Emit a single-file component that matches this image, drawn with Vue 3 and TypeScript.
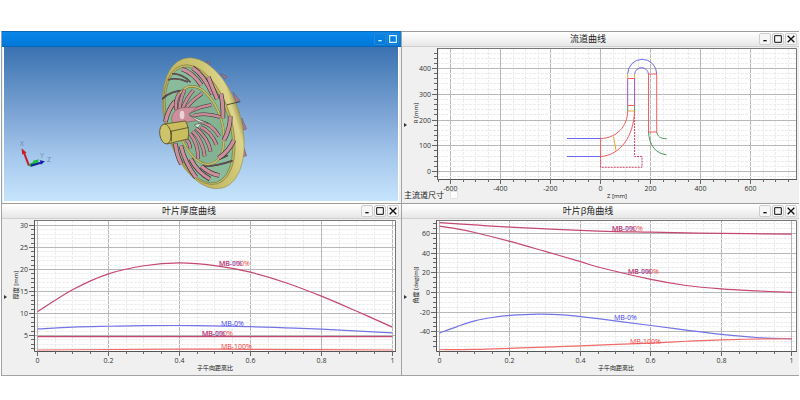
<script setup lang="ts">
type Point = [number, number]

interface Series {
  color: string
  points: Point[]
}

interface CurveLabel {
  text: string
  color: string
  x: number
  y: number
}

interface Chart {
  id: string
  title: string
  width: number
  frame: { left: number; right: number; top: number; bottom: number }
  x: { origin: number; scale: number; min: number; max: number; minor: number; major: number; name: string; nameAt: number }
  y: { origin: number; scale: number; min: number; max: number; minor: number; major: number; name: string; nameAt: number; nameX: number }
  series: Series[]
  labels: CurveLabel[]
  option?: string
}

interface Tick {
  pos: number
  major: boolean
  label: string
}

const HEIGHT = 156
const BLUE = '#7474e6'
const CRIMSON = '#c4486f'
const RED = '#ef6b6b'
const LABEL_BLUE = '#3b3bf0'
const LABEL_RED = '#f03c3c'

const charts: Chart[] = [
  {
    id: 'channel',
    title: '流道曲线',
    width: 397,
    frame: { left: 35, right: 395, top: 1, bottom: 132 },
    x: { origin: 198, scale: 0.25, min: -650, max: 780, minor: 50, major: 200, name: 'Z [mm]', nameAt: 215 },
    y: { origin: 124, scale: 0.2575, min: -20, max: 470, minor: 20, major: 100, name: 'R [mm]', nameAt: 66, nameX: 16 },
    series: [],
    labels: [],
    option: '主流道尺寸',
  },
  {
    id: 'thickness',
    title: '叶片厚度曲线',
    width: 399,
    frame: { left: 32, right: 394, top: 1, bottom: 132 },
    x: { origin: 35, scale: 354.8, min: 0, max: 1, minor: 0.05, major: 0.2, name: '子午向距离比', nameAt: 213 },
    y: { origin: 138, scale: 4.4, min: 2, max: 30, minor: 1, major: 5, name: '厚度 [mm]', nameAt: 66, nameX: 16 },
    series: [
      { color: CRIMSON, points: [[0, 10.4], [0.1, 15.45], [0.2, 19], [0.3, 20.85], [0.4, 21.5], [0.5, 20.9], [0.6, 19.4], [0.7, 17], [0.8, 13.95], [0.9, 10.5], [1, 6.9]] },
      { color: BLUE, points: [[0, 6.5], [0.1, 6.9], [0.2, 7.1], [0.3, 7.25], [0.45, 7.25], [0.6, 7], [0.7, 6.75], [0.8, 6.45], [1, 5.6]] },
      { color: CRIMSON, points: [[0, 4.75], [1, 4.75]] },
      { color: RED, points: [[0, 1.7], [0.4, 1.9], [0.6, 1.85], [1, 1.7]] },
    ],
    labels: [
      { text: 'MB-0%', color: LABEL_BLUE, x: 217, y: 47 },
      { text: 'MB-100%', color: LABEL_RED, x: 217, y: 47 },
      { text: 'MB-0%', color: LABEL_BLUE, x: 219, y: 107 },
      { text: 'MB-0%', color: LABEL_BLUE, x: 200, y: 117 },
      { text: 'MB-100%', color: LABEL_RED, x: 200, y: 117 },
      { text: 'MB-100%', color: LABEL_RED, x: 219, y: 130 },
    ],
  },
  {
    id: 'beta',
    title: '叶片β角曲线',
    width: 397,
    frame: { left: 34, right: 395, top: 1, bottom: 132 },
    x: { origin: 37, scale: 352.4, min: 0, max: 1, minor: 0.05, major: 0.2, name: '子午向距离比', nameAt: 214 },
    y: { origin: 73, scale: 0.985, min: -55, max: 70, minor: 5, major: 20, name: '角度 [deg(m)]', nameAt: 66, nameX: 16 },
    series: [
      { color: CRIMSON, points: [[0, 70.9], [0.1, 68.6], [0.2, 66.4], [0.45, 62.4], [0.6, 61.2], [0.8, 60], [1, 59.3]] },
      { color: CRIMSON, points: [[0, 67.4], [0.05, 64.6], [0.1, 60.9], [0.2, 51.9], [0.3, 41.7], [0.4, 31.3], [0.45, 25.9], [0.6, 13.3], [0.7, 7.1], [0.8, 3.6], [0.9, 1.6], [1, 0.1]] },
      { color: BLUE, points: [[0, -41.2], [0.05, -34.6], [0.1, -28.8], [0.15, -25.4], [0.2, -23.3], [0.28, -22], [0.35, -22.8], [0.45, -26.6], [0.6, -33.5], [0.7, -38.2], [0.8, -42.6], [0.9, -45.7], [1, -47]] },
      { color: RED, points: [[0, -58.1], [0.1, -57.8], [0.2, -56.7], [0.3, -55.4], [0.45, -53.4], [0.6, -51.3], [0.7, -49.5], [0.8, -48], [0.95, -47], [1, -47]] },
    ],
    labels: [
      { text: 'MB-0%', color: LABEL_BLUE, x: 210, y: 12 },
      { text: 'MB-100%', color: LABEL_RED, x: 210, y: 12 },
      { text: 'MB-0%', color: LABEL_BLUE, x: 226, y: 55 },
      { text: 'MB-100%', color: LABEL_RED, x: 226, y: 55 },
      { text: 'MB-0%', color: LABEL_BLUE, x: 212, y: 101 },
      { text: 'MB-100%', color: LABEL_RED, x: 228, y: 125 },
    ],
  },
]

function ticks(axis: Chart['x'] | Chart['y'], direction: 1 | -1): Tick[] {
  const first = Math.ceil(axis.min / axis.minor)
  const last = Math.floor(axis.max / axis.minor + 1e-6)
  const every = Math.round(axis.major / axis.minor)
  const list: Tick[] = []
  for (let i = first; i <= last; i++) {
    const value = i * axis.minor
    list.push({
      pos: Math.round(axis.origin + direction * value * axis.scale) + 0.5,
      major: i % every === 0,
      label: String(Math.round(value * 10) / 10),
    })
  }
  return list
}

/* Smooth curve through the data points (Catmull-Rom turned into Béziers). */
function curve(chart: Chart, points: Point[]): string {
  const p = points.map(([x, y]): Point => [
    chart.x.origin + 0.5 + x * chart.x.scale,
    chart.y.origin + 0.5 - y * chart.y.scale,
  ])
  let d = `M${p[0][0]} ${p[0][1]}`
  for (let i = 0; i < p.length - 1; i++) {
    const a = p[Math.max(i - 1, 0)]
    const b = p[i]
    const c = p[i + 1]
    const e = p[Math.min(i + 2, p.length - 1)]
    d += ` C${b[0] + (c[0] - a[0]) / 6} ${b[1] + (c[1] - a[1]) / 6} ${c[0] - (e[0] - b[0]) / 6} ${c[1] - (e[1] - b[1]) / 6} ${c[0]} ${c[1]}`
  }
  return d
}

const plots = charts.map((chart) => ({
  ...chart,
  xTicks: ticks(chart.x, 1),
  yTicks: ticks(chart.y, -1),
  paths: chart.series.map((s) => ({ color: s.color, d: curve(chart, s.points) })),
}))

const thinBlades = [
  'M68 163 Q90 140 132 138',
  'M86 106 Q110 98 142 112',
  'M98 88 Q126 88 150 112',
  'M84 196 Q92 178 108 164',
  'M186 366 Q225 368 276 350',
  'M200 352 Q238 348 262 334',
]

const outerBlades = [
  'M76 232 Q84 196 104 172',
  'M126 74 Q158 84 184 122',
  'M158 70 Q192 92 218 150',
  'M205 98 Q216 126 232 164',
  'M243 148 Q250 180 249 222',
  'M271 216 Q272 250 252 288',
  'M282 288 Q268 320 236 342',
  'M106 298 Q110 334 124 360',
  'M122 304 Q136 358 168 400',
  'M152 344 Q172 384 210 405',
  'M184 366 Q208 388 238 394',
]

const innerBlades = [
  'M108 196 Q104 168 118 146',
  'M118 194 Q122 160 134 136',
  'M128 192 Q140 160 160 138',
  'M136 196 Q152 170 186 148',
  'M142 206 Q180 186 214 182',
  'M160 214 Q200 204 240 218',
  'M176 232 Q214 236 238 276',
  'M182 248 Q214 262 230 302',
  'M168 252 Q204 280 212 322',
  'M158 260 Q190 292 194 336',
  'M150 268 Q176 300 174 344',
  'M138 286 Q150 294 150 312',
]

const tabs = [
  'M200 50 L209 52 L208 60 Z',
  'M242 88 L260 96 L256 103 Z',
  'M280 144 L299 168 L290 173 Z',
  'M306 222 L320 254 L312 257 Z',
  'M310 304 L320 334 L311 338 Z',
]
</script>

<template>
  <main class="workspace">
    <section class="window active" aria-label="3D">
      <header class="titlebar">
        <h2 class="title"></h2>
        <button type="button" class="tool" aria-label="最小化">
          <svg viewBox="0 0 12 12"><path d="M4 8h4" stroke-width="1.6" /></svg>
        </button>
        <button type="button" class="tool" aria-label="最大化">
          <svg viewBox="0 0 12 12"><path d="M2 2h8v8h-8z" stroke-width="1.4" /></svg>
        </button>
      </header>
      <div class="scene">
        <svg class="view" viewBox="0 0 395 154">
          <defs>
            <linearGradient id="rim" x1="0" y1="0" x2="1" y2="0">
              <stop offset="0" stop-color="#b5ab58" />
              <stop offset="0.7" stop-color="#cfc674" />
              <stop offset="0.92" stop-color="#ddd58c" />
              <stop offset="1" stop-color="#a79d50" />
            </linearGradient>
          </defs>
          <g transform="translate(136.5 -2.5) scale(0.3333)" stroke-linecap="round" stroke-linejoin="round">
            <path v-for="d in tabs" :key="d" :d="d" fill="#b4788a" stroke="#6b4a58" stroke-width="1.5" />
            <ellipse cx="190" cy="237" rx="113" ry="203" transform="rotate(-17 190 237)" fill="url(#rim)" stroke="#8f874a" stroke-width="1.5" />
            <ellipse cx="178" cy="241" rx="97" ry="186" transform="rotate(-17 178 241)" fill="#c3b964" stroke="#6a6538" stroke-width="1.5" />
            <ellipse cx="177" cy="242" rx="91" ry="180" transform="rotate(-17 177 242)" fill="#8abb9a" stroke="#5a6640" stroke-width="1.5" />
            <path d="M262 181 L300 172" stroke="#34331f" stroke-width="2.5" />
            <g fill="none">
              <path v-for="d in thinBlades" :key="d" :d="d" stroke="#3b3337" stroke-width="5" />
              <path v-for="d in thinBlades" :key="d + 'f'" :d="d" stroke="#8a6470" stroke-width="2" />
            </g>
            <ellipse cx="180" cy="243" rx="66" ry="121" transform="rotate(-17 180 243)" fill="#83b392" stroke="#6d683a" stroke-width="7" />
            <ellipse cx="180" cy="243" rx="66" ry="121" transform="rotate(-17 180 243)" fill="none" stroke="#c8be66" stroke-width="5" />
            <g fill="none" stroke-linecap="butt">
              <template v-for="d in outerBlades" :key="d">
                <path :d="d" stroke="#3d2f35" stroke-width="14" />
                <path :d="d" stroke="#cb909b" stroke-width="10" />
              </template>
              <template v-for="d in innerBlades" :key="d">
                <path :d="d" stroke="#3d2f35" stroke-width="11" />
                <path :d="d" stroke="#c88d98" stroke-width="8" />
              </template>
            </g>
            <path d="M94 222 Q98 196 124 190 L172 188 L146 210 L178 228 L138 234 L100 240 Z" fill="#cc8f9a" stroke="#6b4a52" stroke-width="1.5" />
            <ellipse cx="126" cy="212" rx="7" ry="13" fill="#fff" opacity="0.6" />
            <path d="M150 214 L206 238 L176 232 Z M164 242 L184 236 L174 250 Z" fill="#dcece0" stroke="#3c4a3e" stroke-width="1.5" />
            <path d="M74 239 L136 230 Q150 252 144 284 L82 299 Z" fill="#c9bd5e" stroke="#55502a" stroke-width="2.5" />
            <ellipse cx="76" cy="269" rx="17" ry="30" transform="rotate(-8 76 269)" fill="#cfc46a" stroke="#55502a" stroke-width="2.5" />
            <path d="M93 261 L144 250 M93 261 L94 290" stroke="#4a4524" stroke-width="2.5" fill="none" />
          </g>
          <path d="M25 119 L20 106" stroke="#c81e28" stroke-width="2" />
          <path d="M17.6 101.5 L22.6 106 L18.3 107.8 Z" fill="#d01822" />
          <path d="M25.5 119 L33 115.5" stroke="#19a53a" stroke-width="3" />
          <path d="M29 114 L35 112.5 L34 116.5 L30 118 Z" fill="#1fbf3f" />
          <path d="M27 119 L37 116" stroke="#1320a0" stroke-width="2" />
          <path d="M36 113.5 L41 114.5 L37 118 Z" fill="#1018b8" />
          <g class="triad">
            <text x="16" y="99">X</text>
            <text x="36" y="111">Y</text>
            <text x="43" y="115">Z</text>
          </g>
        </svg>
      </div>
    </section>

    <section v-for="plot in plots" :key="plot.id" class="window">
      <header class="titlebar">
        <h2 class="title">{{ plot.title }}</h2>
        <button type="button" class="tool" aria-label="最小化">
          <svg viewBox="0 0 12 12"><path d="M4 8h4" stroke-width="1.6" /></svg>
        </button>
        <button type="button" class="tool" aria-label="最大化">
          <svg viewBox="0 0 12 12"><path d="M2 2h8v8h-8z" stroke-width="1.2" /></svg>
        </button>
        <button type="button" class="tool" aria-label="关闭">
          <svg viewBox="0 0 12 12"><path d="M2 2l8 8M10 2l-8 8" stroke-width="1.6" /></svg>
        </button>
      </header>
      <div class="content">
        <svg class="view" :viewBox="`0 0 ${plot.width} ${HEIGHT}`">
          <rect
            :x="plot.frame.left" :y="plot.frame.top"
            :width="plot.frame.right - plot.frame.left" :height="plot.frame.bottom - plot.frame.top"
            fill="#fff"
          />
          <g class="grid">
            <template v-for="t in plot.xTicks" :key="'x' + t.pos">
              <line :class="{ major: t.major }" :x1="t.pos" :x2="t.pos" :y1="plot.frame.top" :y2="plot.frame.bottom" />
            </template>
            <template v-for="t in plot.yTicks" :key="'y' + t.pos">
              <line :class="{ major: t.major }" :x1="plot.frame.left" :x2="plot.frame.right" :y1="t.pos" :y2="t.pos" />
            </template>
          </g>
          <path
            class="frame"
            :d="`M${plot.frame.left + 0.5} ${plot.frame.top + 0.5}H${plot.frame.right - 0.5}V${plot.frame.bottom}`"
          />
          <path
            class="axis"
            :d="`M${plot.frame.left + 0.5} ${plot.frame.top}V${plot.frame.bottom + 0.5}H${plot.frame.right}`"
          />
          <g class="ticks">
            <line
              v-for="t in plot.xTicks" :key="'x' + t.pos"
              :x1="t.pos" :x2="t.pos" :y1="plot.frame.bottom" :y2="plot.frame.bottom + (t.major ? 5 : 3)"
            />
            <line
              v-for="t in plot.yTicks" :key="'y' + t.pos"
              :x1="plot.frame.left - (t.major ? 5 : 3)" :x2="plot.frame.left" :y1="t.pos" :y2="t.pos"
            />
          </g>
          <g class="scale">
            <template v-for="t in plot.xTicks" :key="'x' + t.pos">
              <text v-if="t.major" :x="t.pos" :y="plot.frame.bottom + 12" text-anchor="middle">{{ t.label }}</text>
            </template>
            <template v-for="t in plot.yTicks" :key="'y' + t.pos">
              <text v-if="t.major" :x="plot.frame.left - 6" :y="t.pos + 2.5" text-anchor="end">{{ t.label }}</text>
            </template>
          </g>
          <g class="name">
            <text :x="plot.x.nameAt" :y="plot.frame.bottom + 19" text-anchor="middle">{{ plot.x.name }}</text>
            <text
              :transform="`translate(${plot.y.nameX} ${plot.y.nameAt}) rotate(-90)`"
              text-anchor="middle"
            >{{ plot.y.name }}</text>
          </g>

          <g v-if="plot.id === 'channel'" class="channel">
            <path class="blue" d="M165 91.5H199M165 109.5H199" />
            <path class="dash" d="M232.6 64V109.5H240V120.3H198.6V109.3" />
            <path class="red" d="M198.6 91.5V109.5M199 91.5C214 91 225.500 80 225.700 64M199 109.5C218 108 231.500 90 232.600 64" />
            <path class="orange" d="M211.500 89.500L214 103.500M225.700 64H232.600M225.700 31.500V27M232.600 31.500V27" />
            <path class="green" d="M225.700 58.500V64M232.600 58.500V64" />
            <path class="purple" d="M225.700 31.500V58.500M232.600 31.500V58.500" />
            <path class="red" d="M225.700 31.500H232.600M225.700 58.500H232.600" />
            <path class="blue" d="M225.700 27A14.500 14.700 0 0 1 254.700 27M232.600 27A7 7.200 0 0 1 246.500 27" />
            <path class="red" d="M246.500 27H254.700V85H246.500Z" />
            <path class="green" d="M246.500 85C247 98 254 107 264.500 107.700M254.700 85C255.500 89 258 92 264.500 91.700" />
          </g>

          <path v-for="(line, i) in plot.paths" :key="i" class="curve" :d="line.d" :stroke="line.color" />
          <text
            v-for="(label, i) in plot.labels" :key="'l' + i"
            class="label" :x="label.x" :y="label.y" :fill="label.color"
          >{{ label.text }}</text>
        </svg>
        <button type="button" class="handle" aria-label="展开">
          <svg viewBox="0 0 3 4"><path d="M0 0L3 2L0 4Z" /></svg>
        </button>
        <label v-if="plot.option" class="option">
          {{ plot.option }}
          <input type="checkbox" />
        </label>
      </div>
    </section>
  </main>
</template>

<style>
body {
  background: #fff;
}
</style>

<style scoped>
.workspace {
  display: grid;
  grid-template-columns: 400fr 398fr;
  padding: 31px 1px;
  font-family: 'Open Sans', 'Noto Sans CJK SC', sans-serif;
  color: #222;
}

.window {
  min-width: 0;
  border-left: 1px solid #a2a2a2;
  background: #f0f0f0;
}

.window:nth-child(n + 3) {
  border-bottom: 1px solid #a2a2a2;
}

.titlebar {
  display: flex;
  align-items: center;
  gap: 1px;
  box-sizing: border-box;
  height: 16px;
  padding: 0 2px 0 16px;
  border-top: 1px solid #9c9c9c;
  border-bottom: 1px solid #cfcfcf;
  background: linear-gradient(#fff, #f4f4f4 50%, #e6e6e6);
}

.title {
  flex: 1;
  margin: 0;
  font-size: 9px;
  font-weight: 400;
  line-height: 14px;
  text-align: center;
}

.tool {
  width: 12px;
  height: 12px;
  padding: 0;
  border: 1px solid #cdcdcd;
  border-radius: 2px;
  background: #f6f6f6;
}

.tool svg {
  display: block;
  width: 100%;
  fill: none;
  stroke: #111;
}

.active {
  border-color: #8fa4b8;
}

.active .titlebar {
  border-color: #0a66b8;
  background: linear-gradient(#0a86ea, #0078d7);
}

.active .tool {
  border-color: #2a86d2;
  background: transparent;
}

.active .tool svg {
  stroke: #d8f0ff;
}

.scene {
  margin: 0 2px 0 1px;
  border: solid #fff;
  border-width: 0 1px 2px;
  background: linear-gradient(#3a72b0, #7fa6d6 45%, #a3c6eb 70%, #c6e4fc);
}

.content {
  display: grid;
}

.content > * {
  grid-area: 1 / 1;
}

.view {
  display: block;
  width: 100%;
  height: auto;
}

.handle {
  align-self: center;
  justify-self: start;
  display: grid;
  margin: 0;
  padding: 0 2px;
  border: 0;
  background: none;
}

.handle svg {
  width: 3px;
  height: 4px;
  fill: #333;
}

.option {
  align-self: end;
  justify-self: start;
  display: flex;
  align-items: center;
  gap: 6px;
  padding: 0 0 2px 2px;
  font-size: 8px;
  line-height: 12px;
}

.option input {
  appearance: none;
  width: 8px;
  height: 8px;
  margin: 0;
  border: 1px solid #e2e2e2;
  background: #fff;
}

.option input:checked {
  background: #0078d7;
}

.grid line {
  stroke: #ededed;
  stroke-dasharray: 3 1;
}

.grid line.major {
  stroke: #b8b8b8;
  stroke-dasharray: none;
}

.frame {
  fill: none;
  stroke: #777;
}

.axis {
  fill: none;
  stroke: #555;
}

.ticks line {
  stroke: #666;
}

.scale text,
.name text {
  font-size: 7px;
  fill: #333;
}

.name text {
  font-size: 6px;
  fill: #111;
}

.curve {
  fill: none;
  stroke-width: 1.2;
}

.label {
  font-size: 7px;
}

.triad text {
  font-size: 7px;
  fill: #6f88a8;
}

.channel path {
  fill: none;
}

.channel .blue {
  stroke: #6a6af0;
}

.channel .red {
  stroke: #f06060;
}

.channel .orange {
  stroke: #eda53c;
}

.channel .green {
  stroke: #4f9458;
}

.channel .purple {
  stroke: #9a4fd0;
}

.channel .dash {
  stroke: #cc4466;
  stroke-dasharray: 2 1;
}
</style>
